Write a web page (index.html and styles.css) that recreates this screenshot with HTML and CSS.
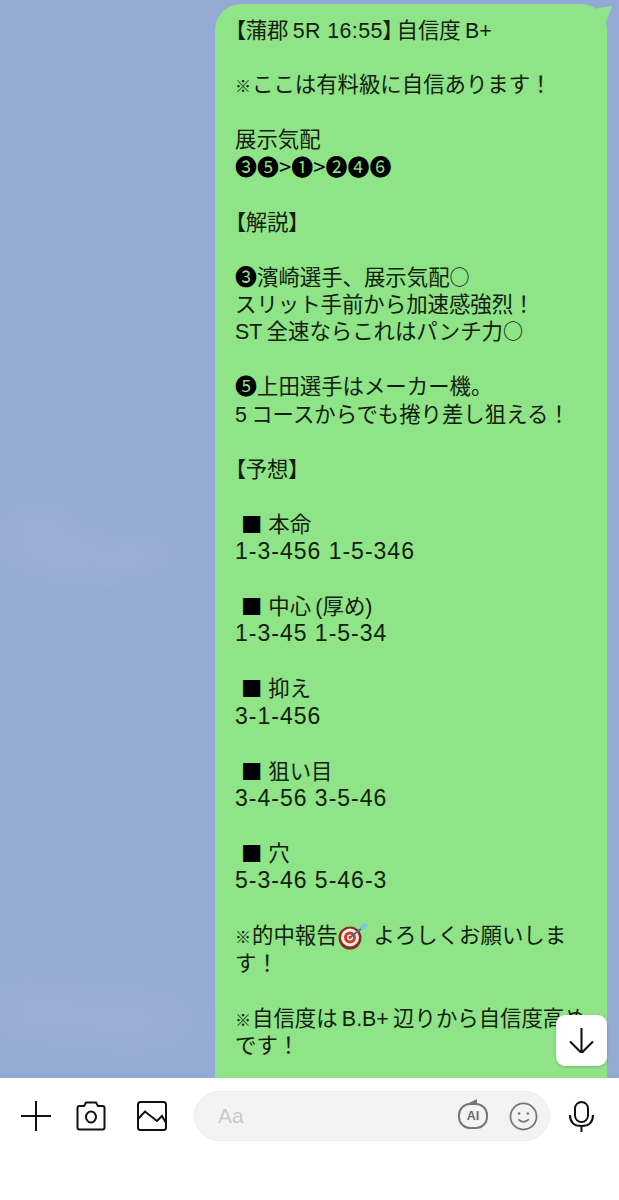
FILE: index.html
```html
<!DOCTYPE html>
<html lang="ja">
<head>
    <meta charset="UTF-8">
    <title>トーク</title>
    <link rel="stylesheet" href="styles.css">
</head>
<body>
    <div class="screen">
        <main class="chat">
            <div class="bubble">
                <svg class="tail" viewBox="0 0 21 20"><path d="M2 5 L20 2 L14 18 L2 18 Z"/></svg>
                <div class="message">
                    <p><span class="br">【</span>蒲郡&#8201;<span class="time">5R 16:55</span><span class="br br-end">】</span>自信度&#8201;B+</p>
                    <p><span class="note">※</span>ここは有料級に自信あります！</p>
                    <p>展示気配<br><span class="num">❸❺&gt;❶&gt;❷❹❻</span></p>
                    <p><span class="br">【</span>解説<span class="br">】</span></p>
                    <p><span class="num">❸</span>濱崎選手、展示気配<span class="cjk">○</span><br>スリット手前から加速感強烈！<br>ST&#8201;全速ならこれはパンチ力<span class="cjk">○</span></p>
                    <p><span class="num">❺</span>上田選手はメーカー機。<br>5&#8201;コースからでも捲り差し狙える！</p>
                    <p><span class="br">【</span>予想<span class="br">】</span></p>
                    <p> <span class="mark">■</span> 本命<br><span class="digits">1-3-456 1-5-346</span></p>
                    <p> <span class="mark">■</span> 中心&#8201;(厚め)<br><span class="digits">1-3-45 1-5-34</span></p>
                    <p> <span class="mark">■</span> 抑え<br><span class="digits">3-1-456</span></p>
                    <p> <span class="mark">■</span> 狙い目<br><span class="digits">3-4-56 3-5-46</span></p>
                    <p> <span class="mark">■</span> 穴<br><span class="digits">5-3-46 5-46-3</span></p>
                    <p><span class="note">※</span>的中報告<svg class="dart" viewBox="0 0 30 28"><circle cx="12" cy="16" r="11.500" fill="#8e2a22"/><circle cx="12" cy="15.500" r="9" fill="#f3ece6"/><circle cx="12" cy="15.500" r="6" fill="#d33a2c"/><circle cx="12" cy="15.500" r="3" fill="#f3ece6"/><circle cx="12" cy="15.500" r="1.400" fill="#d33a2c"/><path d="M12 15.500 L24 6" stroke="#3f6f86" stroke-width="1.800"/><path d="M22 6 L25 1 L29.500 2 L28 6.500 L24 8 Z" fill="#7fc4e0"/></svg> よろしくお願いしま<br>す！</p>
                    <p><span class="note">※</span>自信度は&#8201;B.B+&#8201;辺りから自信度高め<br>です！</p>
                </div>
            </div>
            <button class="scroll-down">
                <svg viewBox="0 0 24 24"><path d="M12 0 V24 M1 13 L12 24 L23 13"/></svg>
            </button>
        </main>
        <footer class="input-bar">
            <div class="tools">
                <svg class="icon plus" viewBox="0 0 32 32"><path d="M16 1 V31 M1 16 H31"/></svg>
                <svg class="icon camera" viewBox="0 0 30 30"><path d="M1.500 7 Q1.500 5 3.500 5 H8 L10 1.500 H20 L22 5 H26.500 Q28.500 5 28.500 7 V26.500 Q28.500 28.500 26.500 28.500 H3.500 Q1.500 28.500 1.500 26.500 Z"/><ellipse cx="15" cy="16" rx="5" ry="5.500"/></svg>
                <svg class="icon picture" viewBox="0 0 30 30"><rect x="1" y="1" width="28" height="28" rx="2.500"/><path d="M1 18 L8 10.500 L20 20 L25 15 L29 22"/></svg>
            </div>
            <div class="field">
                <span class="placeholder">Aa</span>
                <span class="ai-badge">AI<svg class="ai-flag" viewBox="0 0 10 5"><path d="M0 5 L10 0 V5 Z"/></svg></span>
                <svg class="smile" viewBox="0 0 30 30"><circle cx="15" cy="15" r="13.500"/><circle class="eye" cx="10.500" cy="12" r="1.300"/><circle class="eye" cx="19.500" cy="12" r="1.300"/><path d="M9.500 18 Q15 23 20.500 18"/></svg>
            </div>
            <svg class="icon mic" viewBox="0 0 25 31"><rect x="6" y="1" width="13" height="20" rx="6.500"/><path d="M1 14 Q1 25 12.500 25 Q24 25 24 14 M12.500 25 V31"/></svg>
        </footer>
    </div>
</body>
</html>
```
FILE: styles.css
```css
* {
    box-sizing: border-box;
}
body {
    margin: 0;
    font-family: "Liberation Sans", "Noto Sans CJK JP", "DejaVu Sans", sans-serif;
    color: #12200f;
}
.screen {
    display: flex;
    flex-direction: column;
    height: 1200px;
    overflow: hidden;
    background-color: #fff;
}
.chat {
    position: relative;
    height: 1078px;
    overflow: hidden;
    display: flex;
    justify-content: flex-end;
    padding: 4px 12px 0 0;
    background-color: #93aad5;
    background-image:
        radial-gradient(ellipse 70px 50px at 40px 530px, rgba(165, 178, 220, .5), transparent),
        radial-gradient(ellipse 80px 40px at 130px 555px, rgba(165, 178, 220, .45), transparent),
        radial-gradient(ellipse 90px 45px at 60px 565px, rgba(165, 178, 220, .35), transparent),
        radial-gradient(ellipse 110px 60px at 130px 1020px, rgba(165, 178, 220, .5), transparent),
        radial-gradient(ellipse 90px 60px at 30px 1010px, rgba(165, 178, 220, .45), transparent);
}
.bubble {
    position: relative;
    width: 392px;
    height: 1200px;
    padding: 13.500px 16px 0 20px;
    background-color: #8ee486;
    border-radius: 26px 26px 0 0;
}
.tail {
    position: absolute;
    top: 0;
    right: -6px;
    width: 21px;
    height: 20px;
    fill: #8ee486;
}
.message {
    font-size: 21.400px;
    line-height: 27.450px;
}
.message p {
    margin: 0 0 27.450px;
    white-space: pre-wrap;
}
.br {
    font-family: "Noto Sans CJK JP", sans-serif;
    font-feature-settings: "palt";
    line-height: 0;
}
.br-end {
    margin-right: 3px;
}
.time {
    letter-spacing: .4px;
}
.note {
    font-size: 16px;
    letter-spacing: 1px;
    line-height: 0;
}
.num {
    font-family: "Noto Sans CJK JP", "DejaVu Sans", sans-serif;
    font-size: 22px;
    line-height: 0;
    color: #000;
}
.cjk {
    font-family: "Noto Sans CJK JP", sans-serif;
    font-size: 20px;
    line-height: 0;
}
.mark {
    font-family: "Noto Sans CJK JP", sans-serif;
    line-height: 0;
    color: #000;
}
.digits {
    font-size: 23px;
    letter-spacing: 1px;
    line-height: 0;
}
.dart {
    width: 30px;
    height: 28px;
    margin: -8px 0;
    vertical-align: 1px;
}
.scroll-down {
    position: absolute;
    top: 1015px;
    left: 556px;
    width: 51px;
    height: 51px;
    padding: 13px;
    border: none;
    border-radius: 9px;
    background-color: #fff;
    box-shadow: 0 1px 3px rgba(0, 0, 0, .2);
}
.scroll-down svg {
    display: block;
    fill: none;
    stroke: #111;
    stroke-width: 2;
}
.input-bar {
    display: flex;
    align-items: center;
    height: 76px;
    padding: 0 0 0 20px;
}
.tools {
    display: flex;
    align-items: center;
    gap: 24px;
}
.icon {
    fill: none;
    stroke: #111;
    stroke-width: 2;
    flex: none;
}
.plus {
    width: 32px;
    height: 32px;
}
.camera, .picture {
    width: 30px;
    height: 30px;
}
.picture {
    margin-left: 7px;
}
.field {
    display: flex;
    align-items: center;
    width: 356px;
    height: 50px;
    margin: 0 0 0 27px;
    padding: 0 11px 0 23px;
    background-color: #f3f3f3;
    border: 1px solid #ececec;
    border-radius: 25px;
}
.placeholder {
    flex: 1;
    font-size: 21px;
    color: #c9c9c9;
}
.ai-badge {
    position: relative;
    width: 30px;
    height: 26px;
    margin-right: 21px;
    border: 2px solid #777;
    border-radius: 12px;
    font-size: 12.500px;
    font-weight: bold;
    line-height: 22px;
    text-align: center;
    color: #6a6a6a;
}
.ai-flag {
    position: absolute;
    top: -6px;
    left: 7px;
    width: 10px;
    height: 5px;
    fill: #777;
}
.smile {
    width: 29px;
    height: 29px;
    fill: none;
    stroke: #777;
    stroke-width: 1.800;
}
.smile .eye {
    fill: #777;
    stroke: none;
}
.mic {
    width: 25px;
    height: 31px;
    margin-left: 19px;
}
```
